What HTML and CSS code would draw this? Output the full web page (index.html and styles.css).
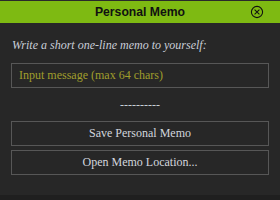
FILE: index.html
```html
<!DOCTYPE html>
<html>
<head>
<meta charset="utf-8">
<link rel="stylesheet" href="styles.css">
</head>
<body>
<div class="dialog">
  <div class="titlebar">
    <span class="title">Personal Memo</span>
    <svg class="close" width="14" height="14" viewBox="0 0 14 14">
      <circle cx="7" cy="7" r="5.6" fill="none" stroke="#111" stroke-width="1.1"/>
      <path d="M4.6 4.6 L9.4 9.4 M9.4 4.6 L4.6 9.4" stroke="#111" stroke-width="1.1"/>
    </svg>
  </div>
  <div class="content">
    <div class="label">Write a short one-line memo to yourself:</div>
    <div class="input">Input message (max 64 chars)</div>
    <div class="sep">----------</div>
    <div class="buttons">
      <div class="btn">Save Personal Memo</div>
      <div class="btn">Open Memo Location...</div>
    </div>
  </div>
</div>
<div class="footer"></div>
</body>
</html>
```
FILE: styles.css
```css
html, body {
  margin: 0;
  padding: 0;
  background: #272727;
  width: 280px;
  height: 200px;
  overflow: hidden;
}
.dialog {
  height: 195px;
  background: #272727;
  border-top: 1px solid #2a2a2a;
  box-sizing: border-box;
  display: flex;
  flex-direction: column;
}
.titlebar {
  height: 22px;
  background: #7eba12;
  position: relative;
  display: flex;
  align-items: center;
  justify-content: center;
}
.title {
  font-family: "Liberation Sans", Arial, sans-serif;
  font-weight: bold;
  font-size: 12.2px;
  color: #111;
  line-height: 22px;
}
.close {
  position: absolute;
  left: 250px;
  top: 4px;
}
.content {
  padding: 15px 11px 0 11px;
  display: flex;
  flex-direction: column;
  font-family: "Liberation Serif", "Times New Roman", serif;
  font-size: 12px;
}
.label {
  font-style: italic;
  color: #c9ced8;
  line-height: 14px;
  padding-left: 1px;
}
.input {
  margin-top: 11px;
  height: 25px;
  box-sizing: border-box;
  border: 1px solid #575757;
  color: #a09e2c;
  line-height: 23px;
  padding-left: 7px;
}
.sep {
  margin-top: 10px;
  text-align: center;
  color: #c9ced8;
  line-height: 14px;
}
.buttons {
  margin-top: 9px;
  display: flex;
  flex-direction: column;
  gap: 4px;
}
.btn {
  height: 25px;
  box-sizing: border-box;
  border: 1px solid #575757;
  color: #d2d6de;
  text-align: center;
  line-height: 23px;
}
.footer {
  height: 5px;
  background: #1f1f1f;
}
```
